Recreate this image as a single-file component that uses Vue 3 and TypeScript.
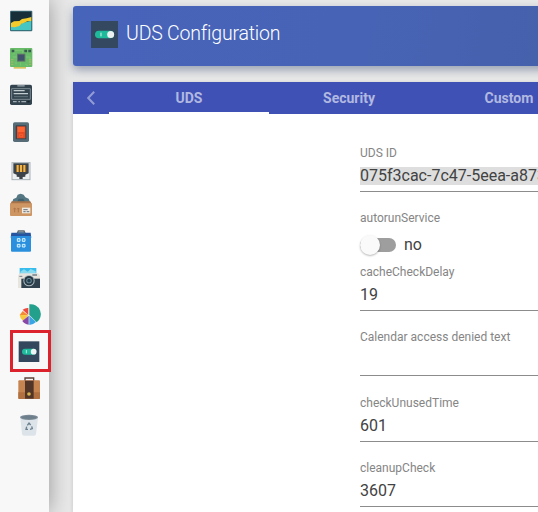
<script setup lang="ts">
interface Field {
  label: string
  value: string
}

const tabs: string[] = ['UDS', 'Security', 'Custom']

const idField: Field = { label: 'UDS ID', value: '075f3cac-7c47-5eea-a873' }

const fields: Field[] = [
  { label: 'cacheCheckDelay', value: '19' },
  { label: 'Calendar access denied text', value: '' },
  { label: 'checkUnusedTime', value: '601' },
  { label: 'cleanupCheck', value: '3607' },
]
</script>

<template>
  <div class="page">
    <nav class="sidebar">
      <a class="item">
        <svg class="icon" viewBox="0 0 66 66">
          <rect x="0" y="2" width="67" height="62" rx="3" fill="#3f6d7c" />
          <rect x="3" y="5" width="61" height="56" fill="#172d38" />
          <path d="M3 61V50L22 48L36 39L64 32V61Z" fill="#45c6c2" />
          <path d="M3 39L12 34L28 33L36 27L50 25L64 21V33L52 34L43 38L34 41L28 48L14 52L3 51Z" fill="#f4cb2d" />
        </svg>
      </a>
      <a class="item">
        <svg class="icon" viewBox="0 0 66 66">
          <path d="M11 55H48V65H11Z" fill="#d8c45c" />
          <rect x="0" y="3" width="67" height="57" rx="3" fill="#68bb68" />
          <path d="M12 22V10H38V20M8 30H20M48 30H60V46M18 52V44M32 56V46M46 52L54 56" fill="none" stroke="#7cc774" stroke-width="3" />
          <rect x="21" y="20" width="25" height="24" fill="#63756c" />
          <rect x="24" y="23" width="19" height="18" fill="#40526b" />
          <path d="M5 8H13V16H5ZM43 8H51V16H43ZM55 8H63V16H55Z" fill="#385a50" />
          <path d="M3 38H10M3 45H10M3 52H10M57 38H64M57 45H64M57 52H64" stroke="#b3b468" stroke-width="3" />
        </svg>
      </a>
      <a class="item">
        <svg class="icon" viewBox="0 0 66 66">
          <rect x="0" y="5" width="66" height="61" rx="5" fill="#34444f" />
          <path d="M22 6H44V11H22Z" fill="#84919a" />
          <path d="M5 17H61V49H5Z" fill="#34444f" stroke="#8b989f" stroke-width="2.5" />
          <path d="M11 23H44M11 32H54" stroke="#c3ccd0" stroke-width="3.5" />
          <path d="M12 41H54" stroke="#63737c" stroke-width="3" />
          <path d="M9 56H20M25 56H30M34 56H48" stroke="#a1abb0" stroke-width="4" />
          <path d="M52 56H59" stroke="#17222a" stroke-width="5" />
        </svg>
      </a>
      <a class="item">
        <svg class="icon" viewBox="0 0 66 66">
          <rect x="9" y="7" width="48" height="59" rx="5" fill="#566d78" />
          <rect x="17" y="16" width="32" height="42" rx="2" fill="#36454f" />
          <rect x="21" y="19" width="25" height="36" fill="#e94b24" />
          <path d="M23 21H44V36H23Z" fill="#ff6532" />
          <path d="M33 24V32M29 43H38V50H29Z" fill="none" stroke="#f06a3c" stroke-width="2" />
        </svg>
      </a>
      <a class="item">
        <svg class="icon" viewBox="0 0 66 66">
          <rect x="6" y="17" width="54" height="51" fill="#edf0f1" stroke="#a6b2b8" stroke-width="3" />
          <path d="M10 19H56V49L46 53V59L38 60V66H28V60L20 59V53L10 49Z" fill="#3c444a" />
          <path d="M18 24H49V45H18Z" fill="#755024" />
          <path d="M23 24V45M33 24V45M43 24V45" stroke="#efb64c" stroke-width="6" />
        </svg>
      </a>
      <a class="item">
        <svg class="icon" viewBox="0 0 66 66">
          <path d="M6 29L10 18L19 14L23 5L32 2L41 5L46 13L56 17L61 29Z" fill="#557783" />
          <path d="M20 29L26 17H40L47 29Z" fill="#3f606d" />
          <path d="M5 25H61L66 35H0Z" fill="#a87348" />
          <rect x="0" y="31" width="66" height="38" rx="3" fill="#cd9662" />
          <path d="M14 58V46M10 49L14 45L18 49M25 58V46M21 49L25 45L29 49" fill="none" stroke="#a76f46" stroke-width="2.5" />
          <rect x="36" y="44" width="25" height="17" fill="#f0e9df" />
          <path d="M40 50H53M40 56H47M50 56H58" stroke="#68747c" stroke-width="3" />
        </svg>
      </a>
      <a class="item">
        <svg class="icon" viewBox="0 0 66 66">
          <path d="M21 12L25 3H42L46 12" fill="none" stroke="#596872" stroke-width="4" />
          <path d="M4 8H62L64 23H2Z" fill="#2554a0" />
          <path d="M3 18H63V62Q63 65 60 65H6Q3 65 3 62Z" fill="#2a8fdc" />
          <path d="M22 9H45" stroke="#456b8c" stroke-width="5" />
          <path d="M22 26H30V34H22ZM37 26H45V34H37ZM22 43H30V51H22ZM37 43H45V51H37Z" fill="#3da5ef" stroke="#d9f3ff" stroke-width="3" />
        </svg>
      </a>
      <a class="item nested">
        <svg class="icon" viewBox="0 0 66 66">
          <path d="M5 3H55V23H5Z" fill="#37bceb" />
          <path d="M7 14L18 7L29 14L38 6L53 13V20H7Z" fill="#8adbf0" />
          <path d="M6 19H60L66 25V63H0V25Z" fill="#e8e5df" />
          <path d="M10 35H66V63H10Z" fill="#30414d" />
          <path d="M43 21H57V27H43Z" fill="#8f999d" />
          <circle cx="33" cy="41" r="17" fill="#aab9c1" />
          <circle cx="33" cy="41" r="14" fill="#263741" />
          <circle cx="33" cy="41" r="8" fill="#7697a7" />
          <circle cx="33" cy="41" r="5.5" fill="#213d4c" />
          <path d="M4 28H13" stroke="#74818a" stroke-width="3" />
        </svg>
      </a>
      <a class="item nested">
        <svg class="icon" viewBox="0 0 66 66">
          <path d="M34 36V4A30 30 0 0 1 56 58Z" fill="#23a08c" />
          <path d="M31 36L14 20Q22 14 31 15Z" fill="#ee493f" />
          <path d="M31 37L5 36L14 24Z" fill="#f58a35" />
          <path d="M31 37L15 53Q6 47 5 36Z" fill="#f7c83b" />
          <path d="M32 38V65Q20 64 13 54Z" fill="#8749a5" />
          <path d="M34 38L54 57Q46 65 34 66Z" fill="#38a6e5" />
        </svg>
      </a>
      <a class="item nested active">
        <svg class="icon" viewBox="0 0 66 66">
          <rect x="2" y="4" width="62" height="62" fill="#34485d" />
          <rect x="12" y="26" width="43" height="18" rx="9" fill="#1dbb9c" />
          <path d="M25 30V40" stroke="#d8f4ec" stroke-width="2.5" />
          <circle cx="47" cy="35" r="8.5" fill="#f0f3f4" />
        </svg>
      </a>
      <a class="item nested">
        <svg class="icon" viewBox="0 0 66 66">
          <path d="M21 16V3H47V16" fill="none" stroke="#594238" stroke-width="4" />
          <rect x="1" y="10" width="65" height="56" rx="3" fill="#c58450" />
          <path d="M1 46H66V63Q66 66 63 66H4Q1 66 1 63Z" fill="#b0703f" />
          <path d="M21 11H47V65H21Z" fill="#523529" />
          <circle cx="33" cy="51" r="5.5" fill="#d6b44e" />
        </svg>
      </a>
      <a class="item nested">
        <svg class="icon" viewBox="0 0 66 66">
          <path d="M7 11H60L54 60Q53 65 48 65H18Q13 65 12 60Z" fill="#dce4e9" />
          <ellipse cx="33" cy="10" rx="27" ry="8" fill="#7b8b96" />
          <ellipse cx="33" cy="10" rx="22" ry="4.5" fill="#6c7f8b" />
          <path d="M28 34L33 27L38 33M41 37L43 44L36 46M30 46H24L26 38" fill="none" stroke="#6c8090" stroke-width="4" />
        </svg>
      </a>
    </nav>

    <main class="main">
      <header class="header">
        <svg class="header-icon" viewBox="0 0 81 81">
          <rect width="81" height="81" fill="#34485f" />
          <rect x="12" y="29" width="57" height="23" rx="11.5" fill="#1dbb9c" />
          <path d="M30 35V46" stroke="#d8f4ec" stroke-width="3" />
          <circle cx="59" cy="40.5" r="10.5" fill="#edf0f1" />
        </svg>
        <h1 class="title">UDS Configuration</h1>
      </header>

      <section class="card">
        <div class="tabs">
          <button class="pager" type="button">
            <svg class="chevron" viewBox="0 0 8 14"><path d="M7.2 .8L1.2 7L7.2 13.2" /></svg>
          </button>
          <div v-for="(tab, i) in tabs" :key="tab" class="tab" :class="{ current: i === 0 }">{{ tab }}</div>
        </div>

        <div class="form">
          <div class="field">
            <label class="label">{{ idField.label }}</label>
            <div class="value"><span class="selection">{{ idField.value }}</span></div>
          </div>

          <div class="switch-field">
            <label class="label">autorunService</label>
            <div class="switch-row">
              <span class="track"><span class="thumb"></span></span>
              <span class="switch-text">no</span>
            </div>
          </div>

          <div class="stack">
            <div v-for="field in fields" :key="field.label" class="field">
              <label class="label">{{ field.label }}</label>
              <div class="value">{{ field.value }}</div>
            </div>
          </div>
        </div>
      </section>
    </main>
  </div>
</template>

<style>
body {
  margin: 0;
  overflow: hidden;
}
</style>

<style scoped>
.page {
  display: flex;
  height: 512px;
  overflow: hidden;
  background: #e8e8e8;
  font-family: Roboto, "Liberation Sans", sans-serif;
  color: #424242;
}

.sidebar {
  position: relative;
  z-index: 1;
  flex: 0 0 49px;
  box-sizing: border-box;
  padding-top: 2.65px;
  background: #f8f8f8;
  box-shadow: 0 0 22px rgba(0, 0, 0, 0.36);
}

.item {
  position: relative;
  display: flex;
  align-items: center;
  height: 36.7px;
  padding-left: 10px;
}

.item.nested {
  padding-left: 18px;
}

.item.active::after {
  content: "";
  position: absolute;
  left: 10px;
  top: -3px;
  width: 35px;
  height: 36px;
  border: 3px solid #dc222c;
}

.icon {
  width: 22px;
  height: 22px;
  overflow: visible;
}

.main {
  flex: 1;
  min-width: 0;
  display: flex;
  flex-direction: column;
  gap: 16px;
  padding: 6px 0 0 24px;
}

.header {
  flex: 0 0 60px;
  width: 640px;
  box-sizing: border-box;
  display: flex;
  align-items: center;
  gap: 8px;
  padding: 0 0 4px 18px;
  border-radius: 3px;
  background: linear-gradient(100deg, #4764bb 0%, #4763b5 45%, #4560a8 85%);
  box-shadow: 0 4px 10px rgba(50, 70, 110, 0.45);
}

.header-icon {
  width: 27px;
  height: 27px;
}

.title {
  margin: 0;
  font-size: 19.5px;
  font-weight: 300;
  letter-spacing: -0.2px;
  line-height: 26px;
  color: #fff;
  white-space: nowrap;
}

.card {
  flex: 1;
  width: 640px;
  background: #fff;
  box-shadow: 0 1px 4px rgba(0, 0, 0, 0.15);
}

.tabs {
  display: flex;
  height: 32px;
  background: #3f51b5;
}

.pager {
  flex: 0 0 36px;
  box-sizing: border-box;
  display: flex;
  align-items: center;
  justify-content: center;
  padding: 0 1px 0 0;
  border: 0;
  background: none;
}

.chevron {
  width: 8px;
  height: 14px;
  fill: none;
  stroke: #929cd5;
  stroke-width: 2;
}

.tab {
  flex: 0 0 160px;
  box-sizing: border-box;
  border-bottom: 2px solid transparent;
  text-align: center;
  font-size: 14px;
  font-weight: 700;
  line-height: 32px;
  color: #b2b9e1;
}

.tab.current {
  border-bottom-color: #fff;
}

.form {
  padding: 32px 0 0 287px;
}

.field {
  border-bottom: 1px solid #8c8c8c;
  padding-bottom: 5px;
}

.label {
  display: block;
  font-size: 12px;
  line-height: 14px;
  color: #858585;
}

.value {
  height: 20px;
  margin-top: 6px;
  font-size: 16px;
  line-height: 20px;
  white-space: nowrap;
}

.selection {
  display: inline-block;
  height: 18px;
  line-height: 18px;
  background: #dedede;
}

.switch-field {
  margin-top: 19px;
}

.switch-row {
  display: flex;
  align-items: center;
  gap: 8px;
  height: 20px;
  margin-top: 10px;
}

.track {
  display: flex;
  align-items: center;
  width: 36px;
  height: 14px;
  border-radius: 7px;
  background: #9e9e9e;
}

.thumb {
  flex: none;
  width: 20px;
  height: 20px;
  border-radius: 50%;
  background: #fafafa;
  box-shadow: 0 1px 2px rgba(0, 0, 0, 0.28);
}

.switch-text {
  font-size: 16px;
  line-height: 20px;
}

.stack {
  display: flex;
  flex-direction: column;
  gap: 19.33px;
  margin-top: 10px;
}
</style>
